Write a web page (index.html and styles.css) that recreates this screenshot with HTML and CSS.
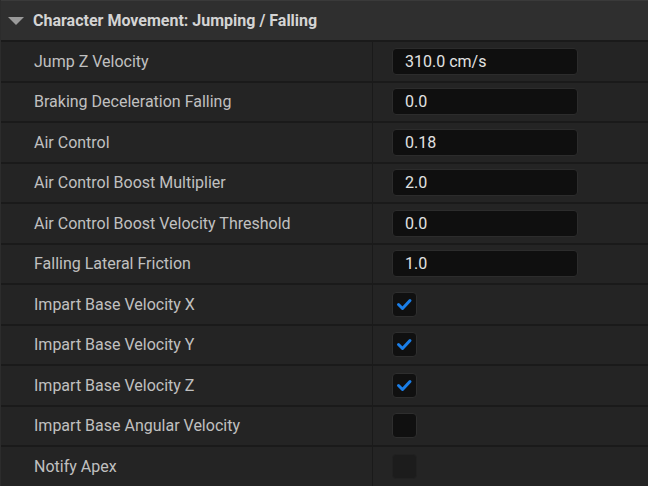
FILE: index.html
```html
<!DOCTYPE html>
<html lang="en">
<head>
   <meta charset="UTF-8">
   <title>Details</title>
   <link rel="stylesheet" href="styles.css">
</head>
<body>
   <div class="panel">
       <div class="category">
           <svg class="arrow" width="16" height="10" viewBox="0 0 16 10"><path d="M0 1 L16 1 L8 9 Z" fill="#9a9a9a"/></svg>
           <span>Character Movement: Jumping / Falling</span>
       </div>

       <div class="row">
           <div class="name">Jump Z Velocity</div>
           <div class="value"><div class="field">310.0 cm/s</div></div>
       </div>
       <div class="row">
           <div class="name">Braking Deceleration Falling</div>
           <div class="value"><div class="field">0.0</div></div>
       </div>
       <div class="row">
           <div class="name">Air Control</div>
           <div class="value"><div class="field">0.18</div></div>
       </div>
       <div class="row">
           <div class="name">Air Control Boost Multiplier</div>
           <div class="value"><div class="field">2.0</div></div>
       </div>
       <div class="row">
           <div class="name">Air Control Boost Velocity Threshold</div>
           <div class="value"><div class="field">0.0</div></div>
       </div>
       <div class="row">
           <div class="name">Falling Lateral Friction</div>
           <div class="value"><div class="field">1.0</div></div>
       </div>
       <div class="row">
           <div class="name">Impart Base Velocity X</div>
           <div class="value"><div class="check"><svg width="25" height="25" viewBox="0 0 25 25"><path d="M6.5 12.5 L10.5 16.5 L18 8.5" fill="none" stroke="#1a7ee8" stroke-width="3" stroke-linecap="round" stroke-linejoin="round"/></svg></div></div>
       </div>
       <div class="row">
           <div class="name">Impart Base Velocity Y</div>
           <div class="value"><div class="check"><svg width="25" height="25" viewBox="0 0 25 25"><path d="M6.5 12.5 L10.5 16.5 L18 8.5" fill="none" stroke="#1a7ee8" stroke-width="3" stroke-linecap="round" stroke-linejoin="round"/></svg></div></div>
       </div>
       <div class="row">
           <div class="name">Impart Base Velocity Z</div>
           <div class="value"><div class="check"><svg width="25" height="25" viewBox="0 0 25 25"><path d="M6.5 12.5 L10.5 16.5 L18 8.5" fill="none" stroke="#1a7ee8" stroke-width="3" stroke-linecap="round" stroke-linejoin="round"/></svg></div></div>
       </div>
       <div class="row">
           <div class="name">Impart Base Angular Velocity</div>
           <div class="value"><div class="check"></div></div>
       </div>
       <div class="row">
           <div class="name">Notify Apex</div>
           <div class="value"><div class="check disabled"></div></div>
       </div>
   </div>
</body>
</html>
```
FILE: styles.css
```css
body {
    margin: 0;
    background: #242424;
    font-family: Roboto, 'Liberation Sans', sans-serif;
    font-size: 16px;
    color: #c0c0c0;
}

.panel {
    width: 648px;
    height: 486px;
    overflow: hidden;
    border-left: 1px solid #2c2c2c;
    box-sizing: border-box;
}

.category {
    display: flex;
    align-items: center;
    height: 39px;
    border-top: 1px solid #3a3a3a;
    background: #2f2f2f;
    font-weight: 700;
    color: #d4d4d4;
}

.arrow {
    margin: 0 9px 0 7px;
}

.row {
    display: flex;
    height: 38.5px;
    border-top: 2px solid #1a1a1a;
}

.name {
    width: 338px;
    padding-left: 33px;
    border-right: 1px solid #1a1a1a;
    display: flex;
    align-items: center;
}

.value {
    display: flex;
    align-items: center;
    padding-left: 19px;
}

.field {
    width: 186px;
    height: 27px;
    box-sizing: border-box;
    border: 1px solid #2c2c2c;
    border-radius: 4px;
    background: #0f0f0f;
    color: #e2e2e2;
    padding-left: 12px;
    display: flex;
    align-items: center;
}

.check {
    width: 25px;
    height: 25px;
    box-sizing: border-box;
    border: 1px solid #2e2e2e;
    border-radius: 4px;
    background: #101010;
    display: flex;
    align-items: center;
    justify-content: center;
}

.check svg {
    flex: none;
}

.check.disabled {
    background: #1c1c1c;
    border-color: #212121;
}
```
